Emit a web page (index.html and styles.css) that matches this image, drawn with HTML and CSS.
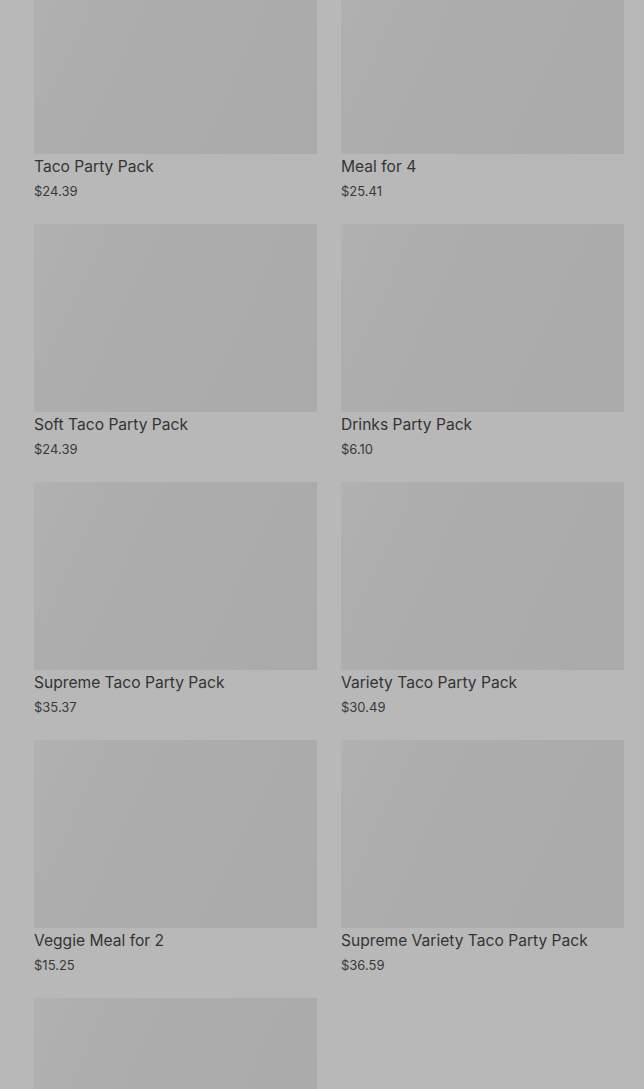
FILE: index.html
```html
<!DOCTYPE html>
<html lang="en">
<head>
    <meta charset="UTF-8" />
    <meta name="viewport" content="width=device-width, initial-scale=1.0" />
    <title>Party Packs</title>
    <link rel="stylesheet" href="styles.css">
</head>
<body>
    <div class="product-grid">
        <div class="product">
            <div class="product-img"></div>
            <div class="product-name">Taco Party Pack</div>
            <div class="product-price">$24.39</div>
        </div>
        <div class="product">
            <div class="product-img"></div>
            <div class="product-name">Meal for 4</div>
            <div class="product-price">$25.41</div>
        </div>
        <div class="product">
            <div class="product-img"></div>
            <div class="product-name">Soft Taco Party Pack</div>
            <div class="product-price">$24.39</div>
        </div>
        <div class="product">
            <div class="product-img"></div>
            <div class="product-name">Drinks Party Pack</div>
            <div class="product-price">$6.10</div>
        </div>
        <div class="product">
            <div class="product-img"></div>
            <div class="product-name">Supreme Taco Party Pack</div>
            <div class="product-price">$35.37</div>
        </div>
        <div class="product">
            <div class="product-img"></div>
            <div class="product-name">Variety Taco Party Pack</div>
            <div class="product-price">$30.49</div>
        </div>
        <div class="product">
            <div class="product-img"></div>
            <div class="product-name">Veggie Meal for 2</div>
            <div class="product-price">$15.25</div>
        </div>
        <div class="product">
            <div class="product-img"></div>
            <div class="product-name">Supreme Variety Taco Party Pack</div>
            <div class="product-price">$36.59</div>
        </div>
        <div class="product">
            <div class="product-img"></div>
        </div>
    </div>
</body>
</html>
```

FILE: styles.css
```css
body {
    font-family: "Inter", "Liberation Sans", sans-serif;
    background-color: #b8b8b8;
    margin: 0;
    padding: 0;
    overflow: hidden;
    height: 1089px;
}

.product-grid {
    display: grid;
    grid-template-columns: 283px 283px;
    column-gap: 24px;
    row-gap: 23px;
    padding: 0 20px 0 34px;
    margin-top: -34px;
}

.product-img {
    height: 188px;
    background: linear-gradient(115deg, #b1b1b1 0%, #adadad 28%, #aaaaaa 100%);
}

.product-name {
    margin-top: 2px;
    font-size: 15.6px;
    line-height: 22px;
    color: #343434;
}

.product-price {
    margin-top: 3px;
    font-size: 13px;
    line-height: 20px;
    color: #3a3a3a;
}
```
